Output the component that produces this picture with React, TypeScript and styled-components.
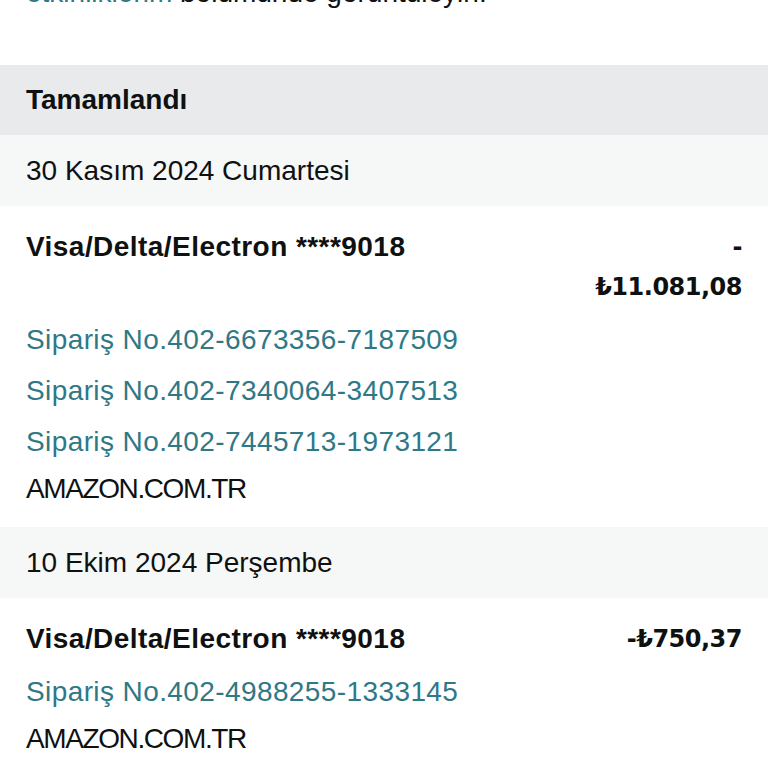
import React from "react";
import styled, { createGlobalStyle } from "styled-components";

const GlobalStyle = createGlobalStyle`
  html, body {
    margin: 0;
    padding: 0;
    background: #ffffff;
  }
  body {
    font-family: "Liberation Sans", Arial, sans-serif;
    color: #0f1111;
    overflow: hidden;
  }
`;

interface Transaction {
  card: string;
  amount: string;
  orders: string[];
  merchant: string;
}

interface DayGroup {
  date: string;
  items: Transaction[];
}

const groups: DayGroup[] = [
  {
    date: "30 Kasım 2024 Cumartesi",
    items: [
      {
        card: "Visa/Delta/Electron ****9018",
        amount: "-₺11.081,08",
        orders: [
          "Sipariş No.402-6673356-7187509",
          "Sipariş No.402-7340064-3407513",
          "Sipariş No.402-7445713-1973121",
        ],
        merchant: "AMAZON.COM.TR",
      },
    ],
  },
  {
    date: "10 Ekim 2024 Perşembe",
    items: [
      {
        card: "Visa/Delta/Electron ****9018",
        amount: "-₺750,37",
        orders: ["Sipariş No.402-4988255-1333145"],
        merchant: "AMAZON.COM.TR",
      },
    ],
  },
];

const Page = styled.div`
  width: 768px;
  height: 768px;
  overflow: hidden;
  background: #ffffff;
`;

const Intro = styled.p`
  margin: -26px 0 54px;
  padding: 0 26px;
  font-size: 28px;
  line-height: 37px;
  color: #0f1111;
`;

const Link = styled.a`
  color: #2f7886;
  text-decoration: none;
`;

const SectionHeader = styled.div`
  height: 70px;
  display: flex;
  align-items: center;
  padding: 0 26px;
  background: #e9eaec;
  font-size: 28px;
  font-weight: 700;
`;

const DateBand = styled.div`
  height: 71px;
  display: flex;
  align-items: center;
  padding: 0 26px;
  background: #f6f7f7;
  font-size: 28px;
`;

const Card = styled.div`
  padding: 21px 26px 16px;
  background: #ffffff;
`;

const TopRow = styled.div`
  display: flex;
  justify-content: space-between;
  align-items: flex-start;
`;

const CardName = styled.div`
  font-size: 28px;
  line-height: 40px;
  font-weight: 700;
  letter-spacing: 0.45px;
`;

const Amount = styled.div`
  width: 150px;
  text-align: right;
  font-family: "DejaVu Sans", "Liberation Sans", sans-serif;
  font-size: 24px;
  line-height: 40px;
  font-weight: 700;
  letter-spacing: -0.5px;
`;

const Orders = styled.div`
  margin-top: 7px;
  display: flex;
  flex-direction: column;
`;

const OrderLink = styled(Link)`
  font-size: 28px;
  line-height: 51px;
  letter-spacing: 0.4px;
`;

const Merchant = styled.div`
  font-size: 28px;
  line-height: 44px;
  letter-spacing: -1.4px;
`;

const renderAmount = (amount: string) => {
  const sign = amount.startsWith("-") ? "-" : "";
  const rest = sign ? amount.slice(1) : amount;
  return (
    <>
      {sign}
      <wbr />
      {rest}
    </>
  );
};

const App = () => {
  return (
    <>
      <GlobalStyle />
      <Page>
        <Intro>
          <Link href="#">etkinliklerim</Link> bölümünde görüntüleyin.
        </Intro>
        <SectionHeader>Tamamlandı</SectionHeader>
        {groups.map((group) => (
          <React.Fragment key={group.date}>
            <DateBand>{group.date}</DateBand>
            {group.items.map((tx, i) => (
              <Card key={i}>
                <TopRow>
                  <CardName>{tx.card}</CardName>
                  <Amount>{renderAmount(tx.amount)}</Amount>
                </TopRow>
                <Orders>
                  {tx.orders.map((o) => (
                    <OrderLink href="#" key={o}>
                      {o}
                    </OrderLink>
                  ))}
                </Orders>
                <Merchant>{tx.merchant}</Merchant>
              </Card>
            ))}
          </React.Fragment>
        ))}
      </Page>
    </>
  );
};

export default App;
